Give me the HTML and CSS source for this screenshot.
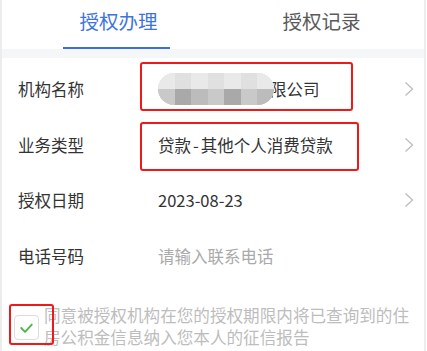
FILE: index.html
```html
<!DOCTYPE html>
<html lang="zh">
<head>
<meta charset="utf-8">
<link rel="stylesheet" href="styles.css">
</head>
<body>
<div class="page">
  <div class="tabs">
    <div class="tab active"><span>授权办理</span></div>
    <div class="tab"><span>授权记录</span></div>
  </div>
  <div class="strip"></div>
  <div class="form">
    <div class="row">
      <div class="label">机构名称</div>
      <div class="value">
        <span class="blur">
          <i class="a"></i><i class="b"></i><i class="a"></i><i class="b"></i><i class="a"></i><i class="b"></i><i class="a"></i>
          <i class="c"></i><i class="d"></i><i class="e"></i><i class="c"></i><i class="d"></i><i class="c"></i><i class="e"></i>
        </span><span class="tail">限公司</span>
        <div class="mark mark1"></div>
      </div>
      <svg class="chev" viewBox="0 0 10 16"><path d="M1.5 1.5 L8.5 8 L1.5 14.5" fill="none" stroke="#bdbdbd" stroke-width="1.3"/></svg>
    </div>
    <div class="row">
      <div class="label">业务类型</div>
      <div class="value">贷款<span class="dash">-</span>其他个人消费贷款<div class="mark mark2"></div></div>
      <svg class="chev" viewBox="0 0 10 16"><path d="M1.5 1.5 L8.5 8 L1.5 14.5" fill="none" stroke="#bdbdbd" stroke-width="1.3"/></svg>
    </div>
    <div class="row">
      <div class="label">授权日期</div>
      <div class="value">2023-08-23</div>
      <svg class="chev" viewBox="0 0 10 16"><path d="M1.5 1.5 L8.5 8 L1.5 14.5" fill="none" stroke="#bdbdbd" stroke-width="1.3"/></svg>
    </div>
    <div class="row">
      <div class="label">电话号码</div>
      <div class="value placeholder">请输入联系电话</div>
    </div>
  </div>
  <div class="agree">
    <div class="check">
      <svg viewBox="0 0 24 24"><path d="M6.5 12.5 L10.5 16.5 L17.5 9" fill="none" stroke="#4cb84c" stroke-width="2" stroke-linecap="round" stroke-linejoin="round"/></svg>
      <div class="mark mark3"></div>
    </div>
    <p class="agree-text">同意被授权机构在您的授权期限内将已查询到的住房公积金信息纳入您本人的征信报告</p>
  </div>
</div>
</body>
</html>
```
FILE: styles.css
```css
* { box-sizing: border-box; }
html, body { margin: 0; padding: 0; background: #fff; }
body {
  font-family: "Noto Sans CJK SC", "Noto Sans", sans-serif;
  width: 427px;
  height: 351px;
  overflow: hidden;
}
.page {
  width: 426px;
  height: 351px;
  border-left: 2px solid #ececee;
  border-right: 2px solid #ececee;
  background: #fff;
}
.tabs {
  display: flex;
  height: 49px;
}
.tab {
  flex: 1;
  display: flex;
  justify-content: center;
  align-items: flex-start;
  padding-top: 6px;
  font-size: 19.5px;
  color: #5a5a5a;
  position: relative;
}
.tab span { line-height: 30px; }
.tab.active { color: #3d74dc; }
.tab.active span { margin-left: 22px; }
.tab.active::after {
  content: "";
  position: absolute;
  left: 61px;
  width: 107px;
  bottom: 0;
  height: 2px;
  background: #3d6fdc;
}
.tab:nth-child(2) span { margin-left: 6px; }
.strip {
  height: 9px;
  background: #f5f6f8;
}
.form {
  padding-top: 3px;
}
.row {
  display: flex;
  align-items: center;
  height: 55.7px;
  padding-left: 16px;
  padding-right: 10px;
}
.label {
  width: 140px;
  font-size: 16.5px;
  color: #333;
}
.value {
  flex: 1;
  font-size: 16.5px;
  color: #333;
  position: relative;
  display: flex;
  align-items: center;
  white-space: nowrap;
}
.value.placeholder { color: #aaa; }
.dash { padding: 0 2px; }
.chev {
  width: 10px;
  height: 16px;
}
.blur {
  display: inline-grid;
  grid-template-columns: repeat(7, 16.5px);
  grid-template-rows: 16px 16px;
  width: 116px;
  height: 32px;
  border-radius: 16px;
  overflow: hidden;
  background: #d7d7d7;
  filter: blur(0.6px);
  margin-right: -4px;
  position: relative;
  z-index: 1;
}
.blur i.a { background: #e9e9e9; }
.blur i.b { background: #e0e0e0; }
.blur i.c { background: #c9c9c9; }
.blur i.d { background: #a9a9a9; }
.blur i.e { background: #bcbcbc; }
.mark {
  position: absolute;
  border: 2px solid #f01818;
  border-radius: 3px;
  pointer-events: none;
}
.mark1 { left: -18px; top: -11px; width: 213px; height: 49px; }
.mark2 { left: -18px; top: -11px; width: 219px; height: 49px; }
.agree {
  display: flex;
  align-items: flex-start;
  padding: 20px 8px 0 12px;
}
.check {
  position: relative;
  flex: none;
  width: 25px;
  height: 25px;
  margin-top: 11px;
  border: 1px solid #dcdcdc;
  border-radius: 4px;
  margin-right: 5px;
}
.check svg { width: 23px; height: 23px; display: block; }
.mark3 { left: -6px; top: -12px; width: 45px; height: 41px; }
.agree-text {
  margin: 0;
  font-size: 16.6px;
  line-height: 22px;
  color: #bdbdbd;
  padding-top: 0;
}
```
